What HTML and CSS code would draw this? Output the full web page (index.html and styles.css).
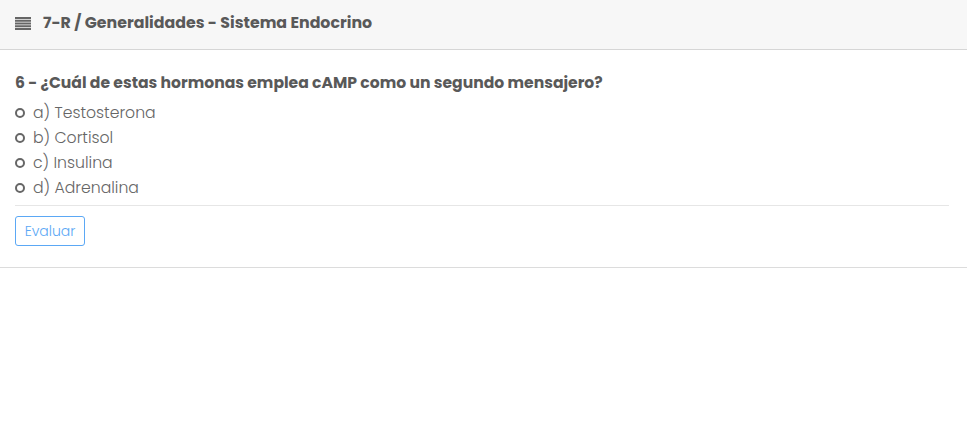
FILE: index.html
```html
<!DOCTYPE html>
<html lang="es">
<head>
<meta charset="utf-8">
<title>7-R / Generalidades - Sistema Endocrino</title>
<link rel="stylesheet" href="styles.css">
</head>
<body>
<div class="card">
  <div class="card-header">
    <svg class="menu-icon" width="16" height="13" viewBox="0 0 16 13" aria-hidden="true">
      <rect x="0" y="0" width="16" height="2" fill="#666"/>
      <rect x="0" y="2.75" width="16" height="2" fill="#666"/>
      <rect x="0" y="5.5" width="16" height="2" fill="#666"/>
      <rect x="0" y="8.25" width="16" height="2" fill="#666"/>
      <rect x="0" y="11" width="16" height="2" fill="#666"/>
    </svg>
    <h1 class="title">7-R / Generalidades - Sistema Endocrino</h1>
  </div>
  <div class="card-body">
    <p class="question">6 - ¿Cuál de estas hormonas emplea cAMP como un segundo mensajero?</p>
    <ul class="options">
      <li class="option"><span class="radio"></span>a) Testosterona</li>
      <li class="option"><span class="radio"></span>b) Cortisol</li>
      <li class="option"><span class="radio"></span>c) Insulina</li>
      <li class="option"><span class="radio"></span>d) Adrenalina</li>
    </ul>
    <hr class="divider">
    <button class="btn">Evaluar</button>
  </div>
</div>
</body>
</html>
```
FILE: styles.css
```css
html, body {
  margin: 0;
  padding: 0;
  background: #fff;
}
body {
  font-family: "Poppins", "Noto Sans", "Open Sans", sans-serif;
  color: #666;
}
.card {
  border-bottom: 1px solid #dcdcdc;
}
.card-header {
  background: #f7f7f7;
  border-bottom: 1px solid #d6d6d6;
  display: flex;
  align-items: center;
  padding: 0 15px 3px;
  box-sizing: border-box;
  height: 50px;
}
.menu-icon {
  display: block;
  margin-right: 12px;
  margin-top: 1px;
}
.title {
  margin: 0;
  font-size: 15.8px;
  font-weight: 700;
  color: #595959;
  line-height: 22px;
}
.card-body {
  padding: 22px 18px 21px 15px;
}
.question {
  margin: 0 0 6px;
  font-size: 15.6px;
  font-weight: 700;
  color: #595959;
  line-height: 22px;
}
.options {
  list-style: none;
  margin: 0;
  padding: 0;
}
.option {
  display: flex;
  align-items: center;
  font-size: 15.7px;
  line-height: 25px;
  color: #666;
  font-weight: 300;
}
.radio {
  width: 6px;
  height: 6px;
  border: 2px solid #666;
  border-radius: 50%;
  margin-right: 8px;
}
.divider {
  border: 0;
  border-top: 1px solid #e6e6e6;
  margin: 5px 0 10px;
}
.btn {
  font-family: inherit;
  font-size: 14px;
  font-weight: 300;
  color: #5ba8f5;
  background: #fff;
  border: 1px solid #5ba8f5;
  border-radius: 3px;
  width: 70px;
  height: 30px;
  padding: 0;
  cursor: pointer;
}
```
